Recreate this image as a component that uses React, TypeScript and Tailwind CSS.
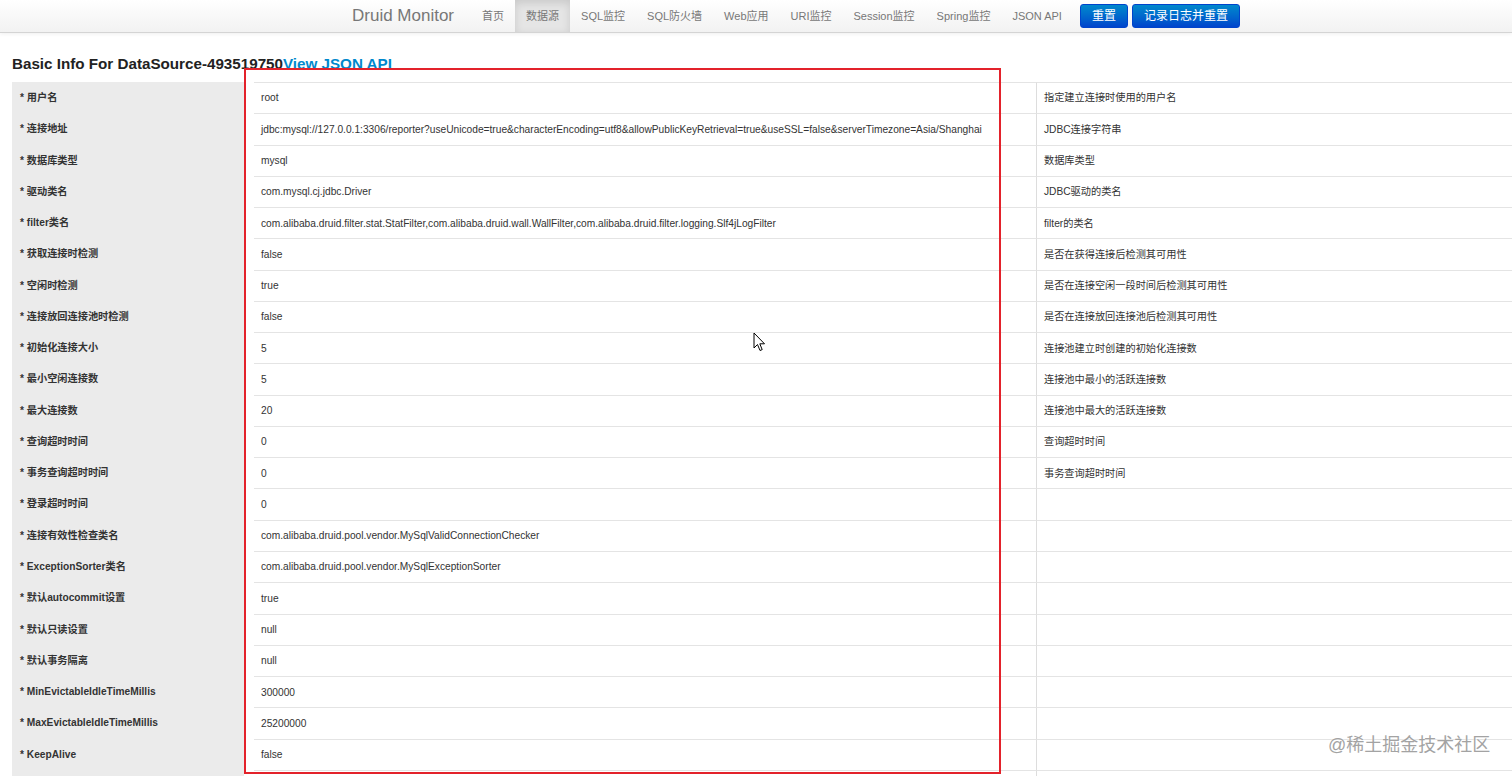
const rows: [string, string, string][] = [
  ["用户名", "root", "指定建立连接时使用的用户名"],
  [
    "连接地址",
    "jdbc:mysql://127.0.0.1:3306/reporter?useUnicode=true&characterEncoding=utf8&allowPublicKeyRetrieval=true&useSSL=false&serverTimezone=Asia/Shanghai",
    "JDBC连接字符串",
  ],
  ["数据库类型", "mysql", "数据库类型"],
  ["驱动类名", "com.mysql.cj.jdbc.Driver", "JDBC驱动的类名"],
  [
    "filter类名",
    "com.alibaba.druid.filter.stat.StatFilter,com.alibaba.druid.wall.WallFilter,com.alibaba.druid.filter.logging.Slf4jLogFilter",
    "filter的类名",
  ],
  ["获取连接时检测", "false", "是否在获得连接后检测其可用性"],
  ["空闲时检测", "true", "是否在连接空闲一段时间后检测其可用性"],
  ["连接放回连接池时检测", "false", "是否在连接放回连接池后检测其可用性"],
  ["初始化连接大小", "5", "连接池建立时创建的初始化连接数"],
  ["最小空闲连接数", "5", "连接池中最小的活跃连接数"],
  ["最大连接数", "20", "连接池中最大的活跃连接数"],
  ["查询超时时间", "0", "查询超时时间"],
  ["事务查询超时时间", "0", "事务查询超时时间"],
  ["登录超时时间", "0", ""],
  ["连接有效性检查类名", "com.alibaba.druid.pool.vendor.MySqlValidConnectionChecker", ""],
  ["ExceptionSorter类名", "com.alibaba.druid.pool.vendor.MySqlExceptionSorter", ""],
  ["默认autocommit设置", "true", ""],
  ["默认只读设置", "null", ""],
  ["默认事务隔离", "null", ""],
  ["MinEvictableIdleTimeMillis", "300000", ""],
  ["MaxEvictableIdleTimeMillis", "25200000", ""],
  ["KeepAlive", "false", ""],
  ["FailFast", "false", ""],
  ["PoolPreparedStatements", "false", ""],
];

const navItems = ["首页", "数据源", "SQL监控", "SQL防火墙", "Web应用", "URI监控", "Session监控", "Spring监控", "JSON API"];

const font = "font-['Liberation_Sans','Noto_Sans_CJK_SC',sans-serif]";

export default function App() {
  return (
    <div className={`relative min-h-screen bg-white text-[#333] ${font}`}>
      {/* Top navbar */}
      <header className="h-[33px] border-b border-[#d4d4d4] bg-gradient-to-b from-white to-[#f2f2f2] shadow-[0_1px_4px_rgba(0,0,0,0.065)]">
        <div className="flex h-full items-center pl-[352px]">
          <span className="mr-[17px] text-[17px] text-[#777]">Druid Monitor</span>
          <nav className="flex h-full items-stretch">
            {navItems.map((item, i) => (
              <a
                key={item}
                className={
                  "flex items-center px-[11px] text-[11px] text-[#777] " +
                  (i === 1 ? "bg-[#e5e5e5] text-[#555] shadow-[inset_0_3px_8px_rgba(0,0,0,0.125)]" : "")
                }
              >
                {item}
              </a>
            ))}
          </nav>
          <div className="ml-[7px] flex gap-[4px]">
            <button className="h-[24px] rounded-[3px] border border-[#0044cc] bg-gradient-to-b from-[#0088cc] to-[#0044cc] px-[11px] text-[12px] text-white">
              重置
            </button>
            <button className="h-[24px] rounded-[3px] border border-[#0044cc] bg-gradient-to-b from-[#0088cc] to-[#0044cc] px-[11px] text-[12px] text-white">
              记录日志并重置
            </button>
          </div>
        </div>
      </header>

      {/* Heading */}
      <h2 className="mt-[21px] mb-[8px] pl-[12px] text-[15.2px] font-bold leading-[20px] text-[#222]">
        Basic Info For DataSource-493519750
        <a className="text-[#0088cc]">View JSON API</a>
      </h2>

      {/* Table */}
      <div className="ml-[12px] grid grid-cols-[232px_10px_782px_1fr] text-[10.2px]">
        {rows.map(([label, value, desc]) => (
          <div key={label} className="contents">
            <div className="flex h-[31.28px] items-center bg-[#ebebeb] pl-[8px] font-bold text-[#333]">
              * {label}
            </div>
            <div />
            <div className="flex h-[31.28px] items-center overflow-hidden whitespace-nowrap border-t border-[#e4e4e4] pl-[7px]">
              {value}
            </div>
            <div className="flex h-[31.28px] items-center border-l border-t border-l-[#dddddd] border-t-[#e4e4e4] pl-[7px]">
              {desc}
            </div>
          </div>
        ))}
      </div>

      {/* Annotation rectangle */}
      <div className="pointer-events-none absolute left-[244px] top-[68px] h-[706px] w-[757px] border-2 border-[#e3222b]" />

      {/* Mouse cursor */}
      <svg className="absolute left-[753px] top-[332px]" width="13" height="20" viewBox="0 0 13 20">
        <path d="M1 1 L1 16 L4.5 12.5 L7 18.5 L9.2 17.6 L6.8 11.8 L11.5 11.8 Z" fill="#fff" stroke="#000" strokeWidth="1" strokeLinejoin="round" />
      </svg>

      {/* Watermark */}
      <div className="absolute left-[1328px] top-[732px] text-[18px] text-[#a3a3a3] [text-shadow:0_0_2px_#fff]">
        @稀土掘金技术社区
      </div>
    </div>
  );
}
